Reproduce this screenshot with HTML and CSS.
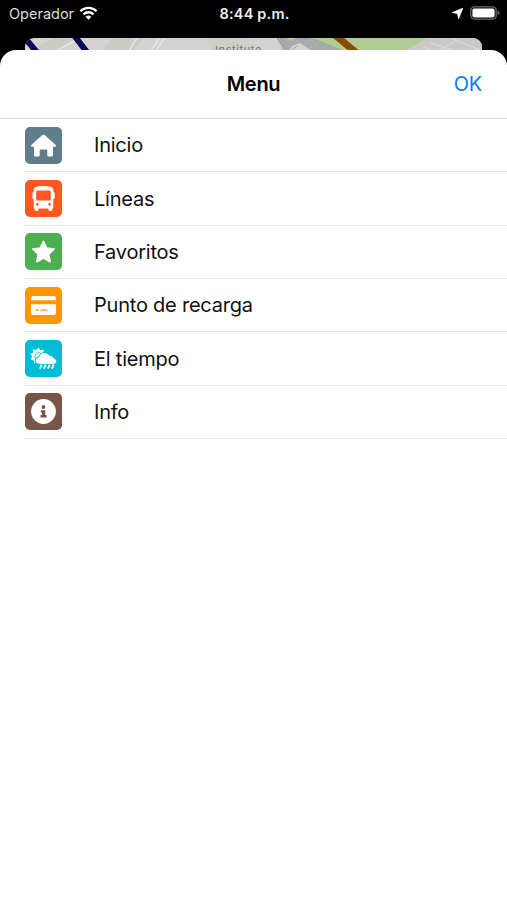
FILE: index.html
```html
<!DOCTYPE html>
<html lang="es">
<head>
    <meta charset="UTF-8">
    <meta name="viewport" content="width=device-width, initial-scale=1.0">
    <title>Menu</title>
    <link rel="stylesheet" href="styles.css">
</head>
<body>
    <!-- Status bar -->
    <div class="status-bar">
        <div class="carrier">
            <span>Operador</span>
            <svg class="wifi" viewBox="0 0 18 14" fill="none" stroke="#fff" stroke-width="2.3">
                <path d="M0.9 5.2a11.6 11.6 0 0 1 16.2 0"/>
                <path d="M3.9 8.3a7.4 7.4 0 0 1 10.2 0"/>
                <path d="M9 13.7L6.1 10.8a4.2 4.2 0 0 1 5.8 0z" fill="#fff" stroke="none"/>
            </svg>
        </div>
        <div class="time">8:44 p.m.</div>
        <div class="indicators">
            <svg class="location" viewBox="0 0 11 11"><path d="M11 0L6.6 11L5.4 5.7L0 4.6z" fill="#fff" stroke="#fff" stroke-width=".5"/></svg>
            <svg class="battery" viewBox="0 0 30 14">
                <rect x="0.8" y="0.8" width="25.4" height="12.4" rx="3.6" fill="#000" stroke="#69696b" stroke-width="1.3"/>
                <rect x="2.4" y="2.4" width="22.2" height="9.2" rx="2" fill="#fff"/>
                <path d="M27.6 4.6q2 .9 2 2.4t-2 2.4z" fill="#69696b"/>
            </svg>
        </div>
    </div>

    <!-- Map card behind the sheet -->
    <div class="map-card">
        <svg class="map" viewBox="0 0 457 30">
            <rect width="457" height="30" fill="#d4d3cf"/>
            <path d="M28 0h22L30 13H4zM87 0h32l-12 13H76z" fill="#cccbc5"/>
            <path d="M55 0L31 13M112 0l-8 13M134 0l-8 13M139 0l-8 13" stroke="#e6e6e4" stroke-width="1.5"/>
            <path d="M186 0h38v13h-38z" fill="#cfcec9"/>
            <path d="M308 0h115l-20 13h-85z" fill="#b0cc92"/>
            <path d="M252 0h33l32 13h-30l-12-8-8 3-3 5h-6q-1-5-6-13z" fill="#a8abad"/>
            <path d="M260 0h12l-6 3zM285 0h25l8 13h-3z" fill="#b0cc92"/>
            <path d="M252 0q2 6 8 9M288 1l30 12M272 8l-5 4" stroke="#8f9491" fill="none" stroke-width=".8"/>
            <path d="M402 0h55v30h-75v-18z" fill="#cbc9c8"/>
            <path d="M405 5l30 9M399 8l10 6M426 0l31 13M432 2l-18 11" stroke="#dedddd" fill="none"/>
            <path d="M0 0L15 18M48-4L65 18" stroke="#07075c" stroke-width="6"/>
            <path d="M310-3L334 17" stroke="#864b06" stroke-width="7"/>
        </svg>
        <span class="map-label">Instituto</span>
    </div>

    <!-- Menu sheet -->
    <div class="sheet">
        <div class="sheet-header">
            <h1>Menu</h1>
            <a href="#" class="ok-btn">OK</a>
        </div>
        <ul class="menu">
            <li>
                <span class="icon home">
                    <svg viewBox="0 0 37 37" fill="#fff"><path d="M17.3 8.1a1.8 1.8 0 0 1 2.4 0L30.7 18q1 1.5-.5 1.7H28v8.5q0 1.4-1.4 1.4h-3q-1.3 0-1.3-1.3v-4.7q0-1.2-1.2-1.2h-5.2q-1.2 0-1.2 1.2v4.7q0 1.3-1.3 1.3h-3Q9 29.6 9 28.2v-8.5H6.8Q5.3 19.5 6.3 18z"/></svg>
                </span>
                <span class="label">Inicio</span>
            </li>
            <li>
                <span class="icon bus">
                    <svg viewBox="0 0 37 37"><path fill="#fff" fill-rule="evenodd" d="M18.5 6C24 6 28.3 7 28.3 9.8V12q1.4.1 1.4 1.7v4q0 1.3-1.4 1.5v8.3q0 1-1 1.2v1q0 1.4-1.4 1.4h-1q-1.4 0-1.4-1.4v-1.2h-10v1.2q0 1.4-1.4 1.4h-1q-1.4 0-1.4-1.4v-1q-1-.2-1-1.2v-8.3Q7.3 19 7.3 17.700v-4Q7.3 12.1 8.7 12V9.8C8.7 7 13 6 18.5 6zM12.8 10.600q-1.600 0-1.600 1.600v6.700q0 1.600 1.600 1.600h11.400q1.600 0 1.600-1.600v-6.700q0-1.600-1.600-1.600zM12.300 23a1.400 1.400 0 1 0 .01 0zM24.700 23a1.400 1.400 0 1 0 .01 0z"/></svg>
                </span>
                <span class="label">Líneas</span>
            </li>
            <li>
                <span class="icon star">
                    <svg viewBox="0 0 37 37"><path d="M18.5 8.3l3.2 6.7 7.5 1-5.4 5.2 1.3 7.5-6.6-3.600-6.600 3.600 1.300-7.500L7.800 16l7.500-1z" fill="#fff" stroke="#fff" stroke-width="1.6" stroke-linejoin="round"/></svg>
                </span>
                <span class="label">Favoritos</span>
            </li>
            <li>
                <span class="icon card">
                    <svg viewBox="0 0 37 37" fill="#fff"><path d="M8.3 9h20.4q2.3 0 2.3 2.3v2H6v-2Q6 9 8.3 9z"/><path fill-rule="evenodd" d="M6 17.2h25v8.5q0 2.3-2.3 2.3H8.3Q6 28 6 25.7zM10.5 22.5v1.2H14v-1.2zM15.5 22.5v1.2H22v-1.2z"/></svg>
                </span>
                <span class="label">Punto de recarga</span>
            </li>
            <li>
                <span class="icon weather">
                    <svg viewBox="0 0 37 37">
                        <path d="M13.5 7.5l1.8 2.7 3.2-.8.1 3.2 2.5 1-9 9-2.7.8-.7-2.900-3-.9 1.400-2.900L5.200 14l2.900-1.500-.2-3.300 3.300.8z" fill="#fff"/>
                        <path d="M10.3 18.300q-1.200-4.300 2.200-5.500 2.300-.6 4.100 1" fill="none" stroke="#00bcd4" stroke-width=".9"/>
                        <path d="M15 24.400q-4.800-.3-4.800-3.900 0-3.400 3.700-3.700 1.400-4.600 6.100-4.300 3.300.2 4.600 2.900 4-.2 4.500 2.900 2.800.7 2.700 3.200-.3 2.800-3.500 2.900z" fill="#fff" stroke="#00bcd4" stroke-width="1"/>
                        <path d="M16.400 25.300l-1.200 2.700M20.400 25.300l-1.200 2.700M24.400 25.300l-1.200 2.700M28.400 25.300l-1.200 2.700" stroke="#fff" stroke-width="1.8" stroke-linecap="round"/>
                    </svg>
                </span>
                <span class="label">El tiempo</span>
            </li>
            <li>
                <span class="icon info">
                    <svg viewBox="0 0 37 37"><circle cx="18.5" cy="18.5" r="12.4" fill="#fff"/><circle cx="18.5" cy="14" r="1.9" fill="#795548"/><path d="M15.8 17.2h4.4v4.900h1.300v2.300h-6v-2.300h1.400v-2.600h-1.100z" fill="#795548"/></svg>
                </span>
                <span class="label">Info</span>
            </li>
        </ul>
    </div>
</body>
</html>
```
FILE: styles.css
```css
* {
    margin: 0;
    padding: 0;
    box-sizing: border-box;
}

body {
    font-family: Inter, "Liberation Sans", sans-serif;
    background-color: #000;
    height: 100vh;
    display: flex;
    flex-direction: column;
    overflow: hidden;
}

/* Status bar */
.status-bar {
    height: 38px;
    padding: 0 7px 12px 9px;
    display: grid;
    grid-template-columns: 1fr auto 1fr;
    align-items: center;
    color: #fff;
}

.carrier {
    display: flex;
    align-items: center;
    gap: 5px;
    color: #ddd;
    font-size: 14.5px;
}

.wifi {
    width: 19px;
    height: 14px;
}

.time {
    font-weight: 600;
    font-size: 14.5px;
    letter-spacing: 0.2px;
    color: #eee;
}

.indicators {
    display: flex;
    justify-content: flex-end;
    align-items: center;
    gap: 7px;
}

.location {
    width: 11px;
    height: 11px;
}

.battery {
    width: 30px;
    height: 14px;
}

/* Map card */
.map-card {
    height: 12px;
    margin: 0 25px;
    border-radius: 9px 9px 0 0;
    overflow: hidden;
    position: relative;
}

.map {
    display: block;
    width: 457px;
    height: 30px;
}

.map-label {
    position: absolute;
    left: 190px;
    top: 5px;
    font-size: 11px;
    line-height: 14px;
    color: #777;
    letter-spacing: 0.6px;
}

/* Sheet */
.sheet {
    flex: 1;
    background-color: #fff;
    border-radius: 16px 16px 0 0;
}

.sheet-header {
    height: 69px;
    padding: 0 25px;
    display: grid;
    grid-template-columns: 1fr auto 1fr;
    align-items: center;
    border-bottom: 1px solid #d9d9db;
}

.sheet-header h1 {
    grid-column: 2;
    font-size: 20px;
    font-weight: 600;
    letter-spacing: -0.3px;
    color: #000;
}

.ok-btn {
    justify-self: end;
    font-size: 20px;
    letter-spacing: -0.2px;
    color: #0a7aff;
    text-decoration: none;
}

/* Menu list */
.menu {
    list-style: none;
    margin-left: 25px;
}

.menu li {
    height: 53.35px;
    display: flex;
    align-items: center;
    gap: 32px;
    border-bottom: 1px solid #e5e5e7;
}

.icon {
    width: 37px;
    height: 37px;
    border-radius: 5px;
}

.icon svg {
    display: block;
    width: 37px;
    height: 37px;
}

.home {
    background-color: #607d8b;
}

.bus {
    background-color: #ff5722;
}

.star {
    background-color: #4caf50;
}

.card {
    background-color: #ff9800;
}

.weather {
    background-color: #00bcd4;
}

.info {
    background-color: #795548;
}

.label {
    font-size: 20px;
    letter-spacing: -0.22px;
    color: #111;
}
```
